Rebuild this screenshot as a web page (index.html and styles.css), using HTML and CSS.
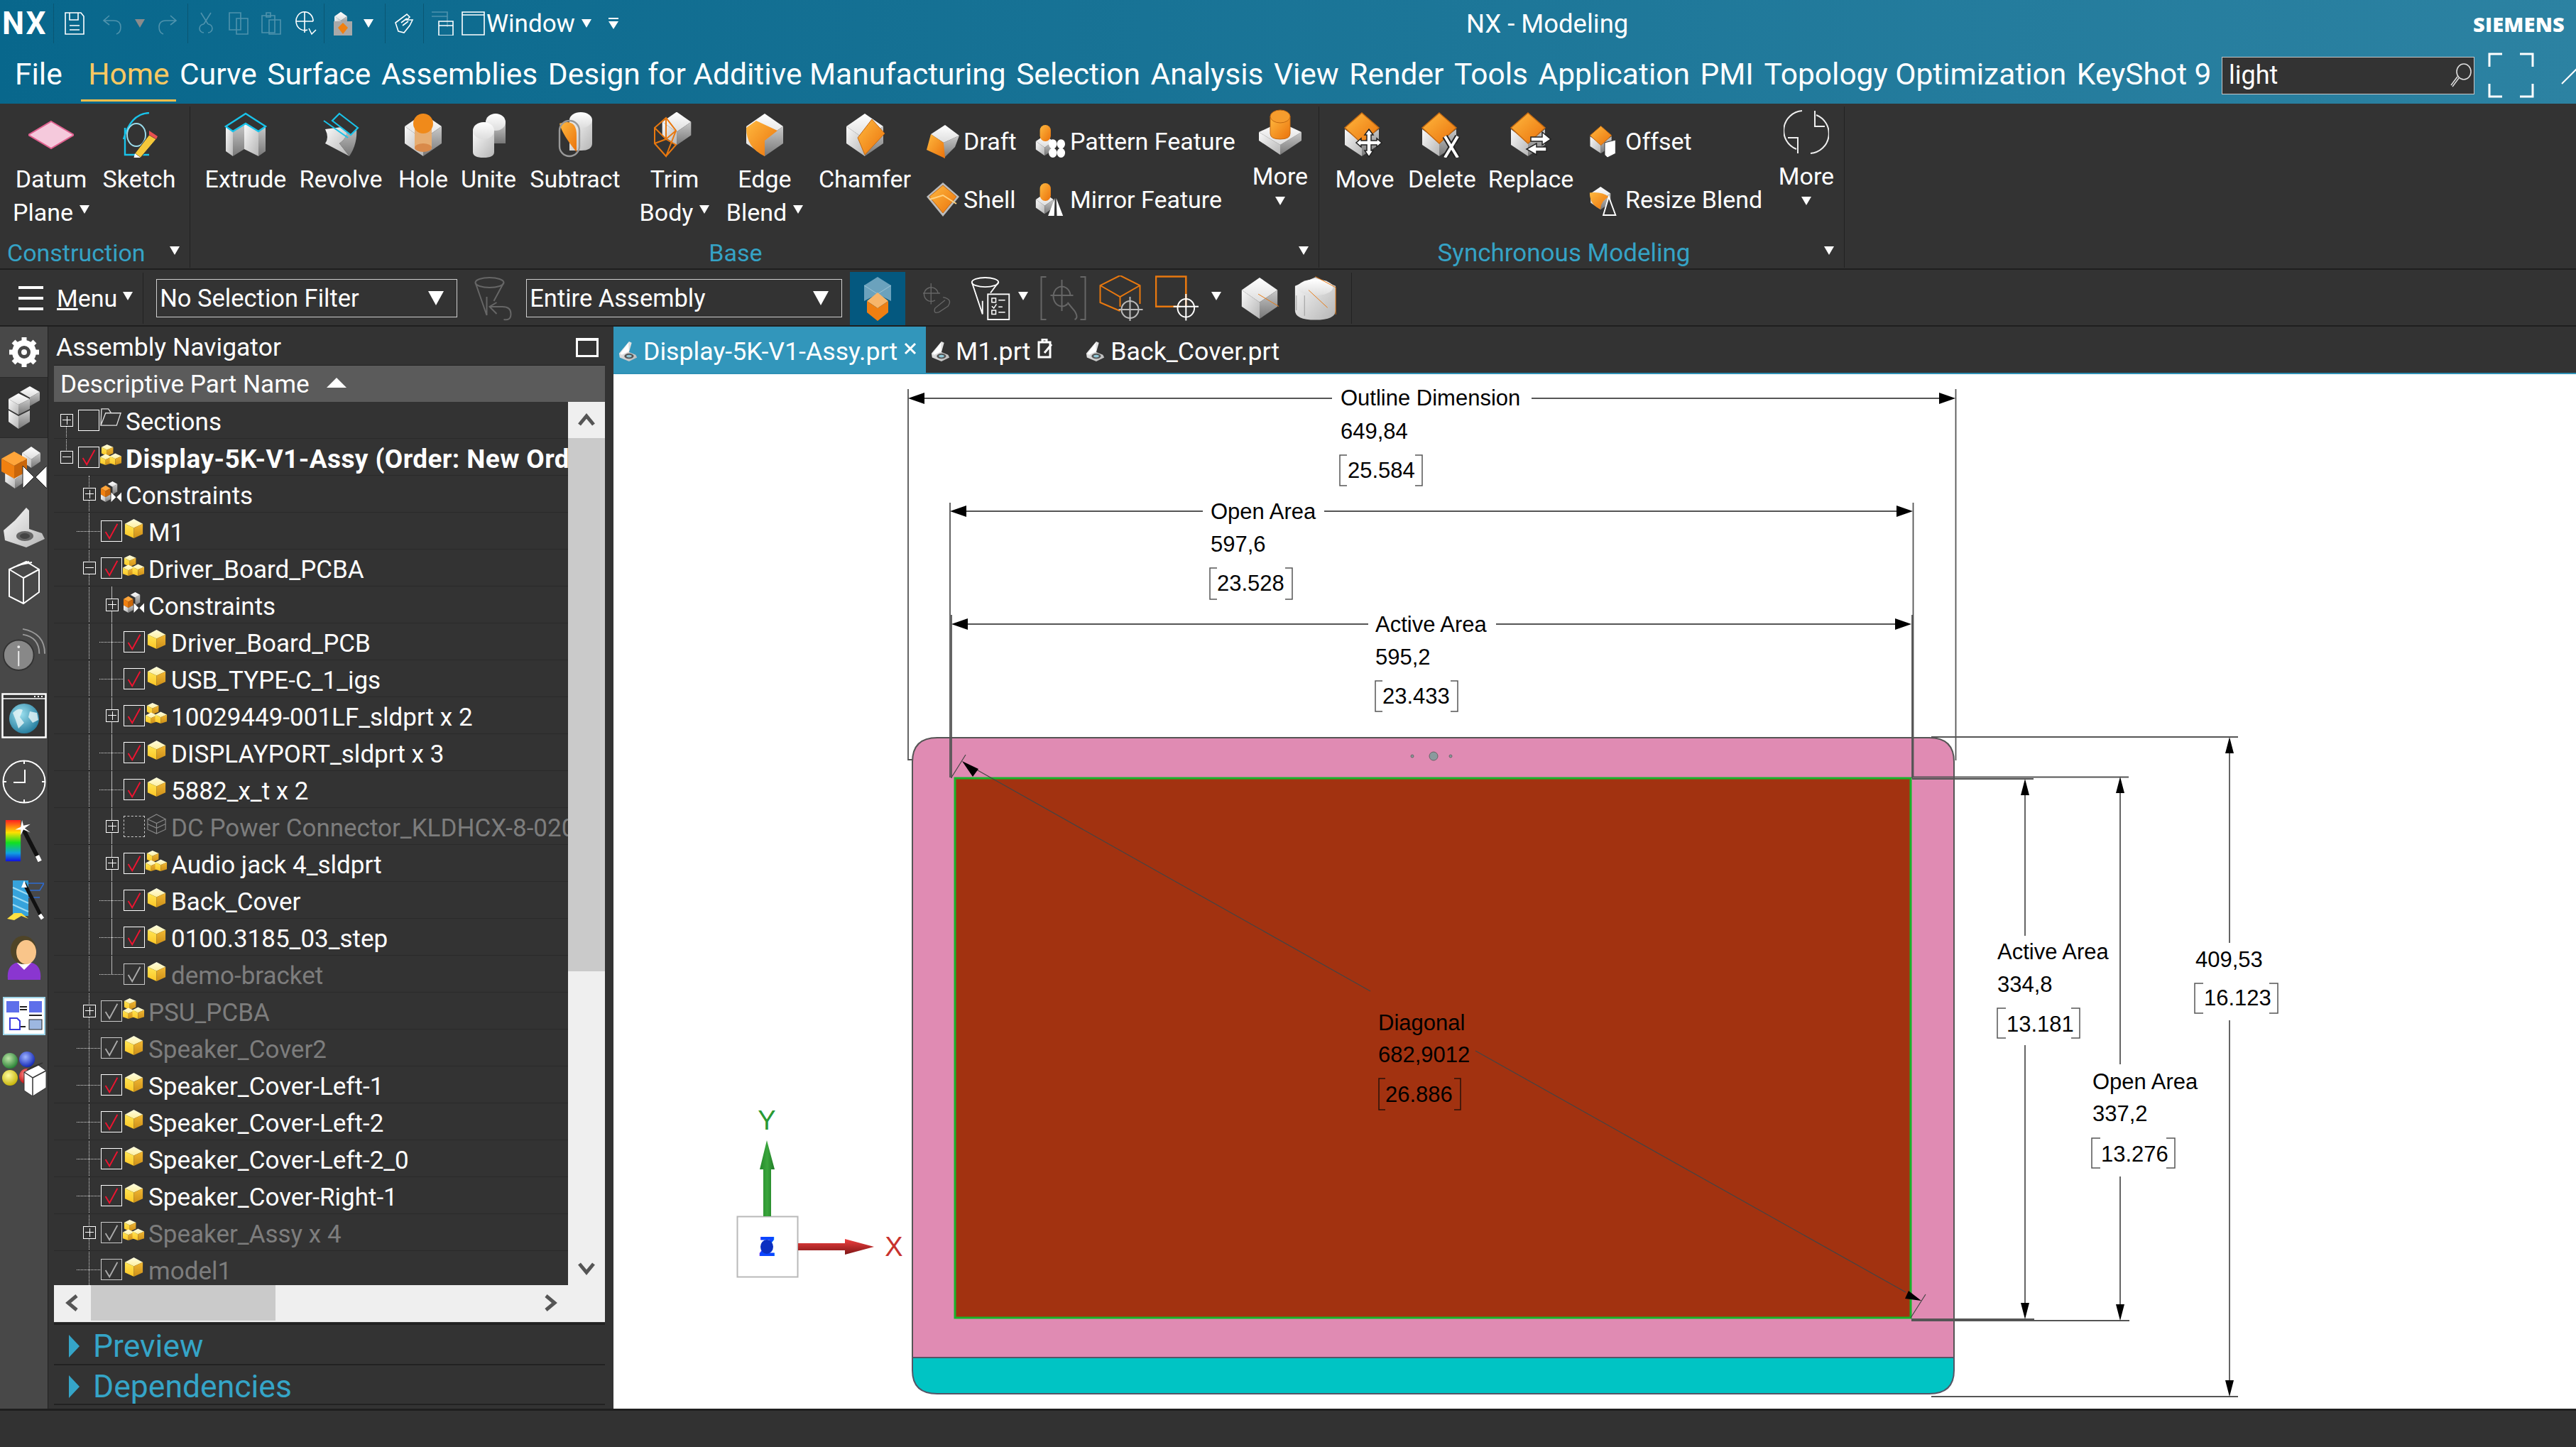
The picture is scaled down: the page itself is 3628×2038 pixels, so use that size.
FILE: index.html
```html
<!DOCTYPE html>
<html lang="en">
<head>
<meta charset="utf-8">
<title>NX - Modeling</title>
<link rel="stylesheet" href="styles.css">
</head>
<body>
<svg class="defs" width="0" height="0" aria-hidden="true">
  <defs>
    <linearGradient id="gL" x1="0" y1="0" x2="1" y2="1"><stop offset="0" stop-color="#fafafa"/><stop offset="1" stop-color="#b5b5b5"/></linearGradient>
    <linearGradient id="gR" x1="0" y1="0" x2="0" y2="1"><stop offset="0" stop-color="#c9c9c9"/><stop offset="1" stop-color="#777"/></linearGradient>
    <linearGradient id="gT" x1="0" y1="0" x2="0" y2="1"><stop offset="0" stop-color="#fff"/><stop offset="1" stop-color="#ddd"/></linearGradient>
    <linearGradient id="gO" x1="0" y1="0" x2="1" y2="1"><stop offset="0" stop-color="#ffb93f"/><stop offset="1" stop-color="#ea720c"/></linearGradient>
    <linearGradient id="gYT" x1="0" y1="0" x2="0" y2="1"><stop offset="0" stop-color="#fffde0"/><stop offset="1" stop-color="#fff0a0"/></linearGradient>
    <linearGradient id="gYL" x1="0" y1="0" x2="0" y2="1"><stop offset="0" stop-color="#ffe655"/><stop offset="1" stop-color="#fcc424"/></linearGradient>
    <linearGradient id="gYR" x1="0" y1="0" x2="0" y2="1"><stop offset="0" stop-color="#f2b833"/><stop offset="1" stop-color="#cc8f18"/></linearGradient>
    <linearGradient id="gRain" x1="0" y1="0" x2="0" y2="1"><stop offset="0" stop-color="#ff2020"/><stop offset=".3" stop-color="#ffe000"/><stop offset=".55" stop-color="#10e020"/><stop offset=".8" stop-color="#10a0e0"/><stop offset="1" stop-color="#1010e0"/></linearGradient>
    <linearGradient id="gXarrow" x1="0" y1="0" x2="0" y2="1"><stop offset="0" stop-color="#f04040"/><stop offset="1" stop-color="#7e1515"/></linearGradient>
    <linearGradient id="gYarrow" x1="0" y1="0" x2="1" y2="0"><stop offset="0" stop-color="#248a2a"/><stop offset=".5" stop-color="#3aa53c"/><stop offset="1" stop-color="#1e7a24"/></linearGradient>
    <radialGradient id="gGlobe" cx=".4" cy=".35" r=".8"><stop offset="0" stop-color="#9be0ef"/><stop offset="1" stop-color="#0f6a8f"/></radialGradient>
    <radialGradient id="gBallG" cx=".4" cy=".35" r=".7"><stop offset="0" stop-color="#bfe6a8"/><stop offset="1" stop-color="#1f7a2f"/></radialGradient>
    <radialGradient id="gBallB" cx=".4" cy=".35" r=".7"><stop offset="0" stop-color="#9fb4ff"/><stop offset="1" stop-color="#0a1fb0"/></radialGradient>
    <radialGradient id="gBallY" cx=".4" cy=".35" r=".7"><stop offset="0" stop-color="#fffca0"/><stop offset="1" stop-color="#c4b000"/></radialGradient>
    <radialGradient id="gBallR" cx=".4" cy=".35" r=".7"><stop offset="0" stop-color="#ff9090"/><stop offset="1" stop-color="#c00000"/></radialGradient>

    <symbol id="cube" viewBox="0 0 32 32">
      <path fill="url(#gYT)" d="M16 2 29 9 16 15 3 9Z"/>
      <path fill="url(#gYL)" d="M3 9 16 15V30L3 24Z"/>
      <path fill="url(#gYR)" d="M29 9 16 15V30L29 24Z"/>
    </symbol>
    <symbol id="asm" viewBox="0 0 32 32">
      <path fill="url(#gYT)" d="M10 1 19 5 10 9 2 5Z"/><path fill="url(#gYL)" d="M2 5 10 9V18L2 14Z"/><path fill="url(#gYR)" d="M19 5 10 9V18L19 14Z"/>
      <path fill="url(#gYT)" d="M8 15 17 19 8 23 0 19Z"/><path fill="url(#gYL)" d="M0 19 8 23V31L0 28Z"/><path fill="url(#gYR)" d="M17 19 8 23V31L17 28Z"/>
      <path fill="url(#gYT)" d="M22 14 31 18 22 22 14 18Z"/><path fill="url(#gYL)" d="M14 18 22 22V31L14 28Z"/><path fill="url(#gYR)" d="M31 18 22 22V31L31 28Z"/>
    </symbol>
    <symbol id="con" viewBox="0 0 32 32">
      <path fill="url(#gT)" d="M18 1 25 5 18 9 11 5Z"/><path fill="url(#gR)" d="M25 5 18 9V20L25 16Z"/>
      <path fill="#ffa53a" d="M8 7 15 11 8 15 1 11Z"/><path fill="#f08010" d="M1 11 8 15V24L1 20Z"/><path fill="#c9660a" d="M15 11 8 15V24L15 20Z"/>
      <path fill="url(#gL)" d="M1 20 8 24V31L1 27Z"/><path fill="url(#gR)" d="M15 20 8 24V31L15 27Z"/>
      <path fill="#fff" d="M16 17 23 24 16 31ZM31 17 24 24 31 31Z"/>
    </symbol>
    <symbol id="part" viewBox="0 0 32 32">
      <path fill="url(#gL)" d="M17 1 21 3 17 17 27 21 29 25 17 31 3 25 2 19Z"/>
      <path fill="#fff" d="M4 19 16 3 17 16 6 21Z"/>
      <ellipse cx="17" cy="23" rx="7" ry="4" fill="#555"/><ellipse cx="17" cy="23" rx="4" ry="2" fill="#8fc6d6"/>
    </symbol>
    <symbol id="tick" viewBox="0 0 30 30"><path d="M6 16 12 26 24 4" fill="none" stroke="currentColor" stroke-width="2"/></symbol>
    <symbol id="hexG" viewBox="0 0 64 64">
      <path fill="url(#gT)" d="M32 2 58 20 32 38 6 20Z"/><path fill="url(#gL)" d="M6 20 32 38V62L6 44Z"/><path fill="url(#gR)" d="M58 20 32 38V62L58 44Z"/>
    </symbol>
    <symbol id="syncBase" viewBox="0 0 64 64">
      <path fill="url(#gL)" d="M4 24 28 42V62L4 46Z"/><path fill="url(#gR)" d="M52 24 28 42V62L52 46Z"/>
      <path fill="url(#gO)" stroke="#c46a12" stroke-width="1.5" d="M28 1 52 22 28 44 4 22Z"/>
    </symbol>
  </defs>
</svg>

<header class="appbar">
  <div class="titlerow">
    <span class="nx">NX</span>
    <i class="qsep m5"></i>
    <svg class="qa w34 m12" viewBox="0 0 34 34"><path class="ql" d="M4 2H26L30 7V32H4ZM10 2V12H22V2M10 20H24M10 26H24"/></svg>
    <svg class="qa w30 m20" viewBox="0 0 30 34"><path class="qd" d="M12 6 4 13 12 19M4 13H18Q28 13 28 22 28 30 22 32"/></svg>
    <span class="caret gray m18"></span>
    <svg class="qa w30 m18" viewBox="0 0 30 34"><path class="qd" d="M18 6 26 13 18 19M26 13H12Q2 13 2 22 2 30 8 32"/></svg>
    <i class="qsep m12"></i>
    <svg class="qa w30 m10" viewBox="0 0 30 34"><path class="qd" d="M8 2 18 18M22 2 12 18M12 18A5 5 0 1 0 12 30M18 18A5 5 0 1 1 18 30"/></svg>
    <svg class="qa w34 m14" viewBox="0 0 34 34"><path class="qd" d="M4 2H20V26H4ZM14 10H30V32H14Z"/></svg>
    <svg class="qa w34 m12" viewBox="0 0 34 34"><path class="qd" d="M4 6H22V30H4ZM10 2H16V8H10ZM14 12H30V32H14Z"/></svg>
    <svg class="qa w34 m14" viewBox="0 0 34 34"><path class="ql" d="M16 1V30M4 14H28M28 14A12 13 0 1 0 20 26M22 24 26 32 32 26"/></svg>
    <i class="qsep m9"></i>
    <svg class="qa w34 m9" viewBox="0 0 34 34"><use href="#hexG" x="3" y="0" width="22" height="22"/><rect x="4" y="14" width="26" height="20" fill="#a9a9a9"/><path fill="#f08010" d="M17 16 24 23 17 32 10 23Z"/></svg>
    <span class="caret m12"></span>
    <i class="qsep m16"></i>
    <svg class="qa w30 m10" viewBox="0 0 30 34"><path class="ql" d="M4 16 20 4 24 8 20 12 28 12 24 20 16 30 8 28ZM12 16 20 10M14 20 22 14"/></svg>
    <i class="qsep m13"></i>
    <svg class="qa w34 m9" viewBox="0 0 34 34"><path class="qd" d="M2 1H24V22M2 7H24"/><path class="ql" d="M12 14H32V34H12ZM12 20H32"/></svg>
    <svg class="qa w36 m9 tall" viewBox="0 0 36 34"><path class="ql" d="M2 1H33V33H2ZM2 5H33"/></svg>
    <span class="win">Window</span>
    <span class="caret m9"></span>
    <span class="overflow m24"></span>
    <span class="app-title">NX - Modeling</span>
    <span class="siemens">SIEMENS</span>
  </div>
  <nav class="menurow">
    <span class="mi file">File</span>
    <span class="mi home">Home</span>
    <span class="mi">Curve</span>
    <span class="mi">Surface</span>
    <span class="mi">Assemblies</span>
    <span class="mi">Design for Additive Manufacturing</span>
    <span class="mi">Selection</span>
    <span class="mi">Analysis</span>
    <span class="mi">View</span>
    <span class="mi">Render</span>
    <span class="mi">Tools</span>
    <span class="mi">Application</span>
    <span class="mi">PMI</span>
    <span class="mi">Topology Optimization</span>
    <span class="mi">KeyShot 9</span>
    <div class="search">
      <span>light</span>
      <svg class="search-ico" viewBox="0 0 32 34"><path d="M2 31 11 19M4 33 13 21" fill="none" stroke="#ddd" stroke-width="1.5"/><ellipse cx="20" cy="12" rx="10" ry="11" fill="none" stroke="#ddd" stroke-width="1.6"/></svg>
    </div>
    <svg class="fullscr" viewBox="0 0 65 64"><path d="M20 2H2V20M45 2H63V20M20 62H2V44M45 62H63V44" fill="none" stroke="#fff" stroke-width="3"/></svg>
    <svg class="slash" viewBox="0 0 30 30"><path d="M1 29 29 1" stroke="#fff" stroke-width="2"/></svg>
  </nav>
</header>

<section class="ribbon">
  <div class="group g-con">
    <div class="tools">
      <div class="tool"><svg class="ticon" viewBox="0 0 64 64"><path fill="#f5c9dc" stroke="#e0608f" stroke-width="2" d="M32 13 64 32 32 51 0 32Z"/></svg><span class="lbl">Datum<br>Plane<i class="caret in"></i></span></div>
      <div class="tool"><svg class="ticon" viewBox="0 0 64 64"><path d="M46 1Q20 2 10 38M12 22V60H46" fill="none" stroke="#19c3ea" stroke-width="2.4"/><ellipse cx="28" cy="32" rx="13" ry="16" fill="none" stroke="#9adbea" stroke-width="2"/><path fill="#f5c83a" stroke="#333" d="M46 32 56 38 34 64 26 58Z"/><path fill="#e85050" d="M46 26 58 34 56 38 46 32Z"/><path fill="#fff" d="M26 58 34 64 24 66Z"/></svg><span class="lbl">Sketch</span></div>
    </div>
    <div class="glabel"><span>Construction</span><i class="caret gl-caret"></i></div>
  </div>
  <div class="group g-base">
    <div class="tools">
      <div class="tool"><svg class="ticon" viewBox="0 0 64 64"><path fill="url(#gL)" d="M4 20 14 27V62L4 55Z"/><path fill="url(#gR)" d="M14 27 30 16V52L14 62Z"/><path fill="url(#gL)" d="M30 16 50 27V62L30 52Z"/><path fill="url(#gR)" d="M50 27 60 20V55L50 62Z"/><path fill="#333" stroke="#19c3ea" stroke-width="2.4" d="M32 2 60 20 50 27 32 16 14 27 4 20Z"/></svg><span class="lbl">Extrude</span></div>
      <div class="tool"><svg class="ticon" viewBox="0 0 64 64"><path fill="url(#gL)" d="M10 24 40 20Q44 34 30 44L44 62 10 44Q16 36 10 24Z"/><path fill="url(#gR)" d="M40 18 54 22Q56 44 44 62L30 44Q44 34 40 18Z"/><path fill="#333" stroke="#19c3ea" stroke-width="2.2" d="M30 2 56 22 46 32 20 12Z"/><path fill="none" stroke="#19c3ea" stroke-width="2" d="M8 12 42 36"/></svg><span class="lbl">Revolve</span></div>
      <div class="tool"><svg class="ticon" viewBox="0 0 64 64"><use href="#hexG"/><rect x="20" y="18" width="24" height="34" fill="#e7ae72"/><ellipse cx="32" cy="16" rx="14" ry="14" fill="#f08a1a"/><ellipse cx="32" cy="50" rx="12" ry="6" fill="#d98a4a"/></svg><span class="lbl">Hole</span></div>
      <div class="tool"><svg class="ticon" viewBox="0 0 64 64"><rect x="26" y="14" width="30" height="30" fill="url(#gR)"/><ellipse cx="42" cy="14" rx="14" ry="12" fill="url(#gT)"/><path fill="url(#gL)" d="M10 26H40V56Q40 64 25 64T10 56Z"/><ellipse cx="25" cy="26" rx="15" ry="12" fill="url(#gT)"/></svg><span class="lbl">Unite</span></div>
      <div class="tool"><svg class="ticon" viewBox="0 0 64 64"><path fill="url(#gL)" d="M24 10H56V44Q56 54 40 54H24Z"/><ellipse cx="40" cy="11" rx="16" ry="11" fill="url(#gT)"/><path fill="url(#gO)" d="M10 16Q34 8 34 32V56Q14 32 10 16Z"/><rect x="10" y="12" width="28" height="50" rx="14" fill="none" stroke="#999" stroke-width="2.4"/></svg><span class="lbl">Subtract</span></div>
      <div class="tool"><svg class="ticon" viewBox="0 0 64 64"><use href="#hexG" x="8" y="-2" width="54" height="50"/><path fill="none" stroke="#e8780f" stroke-width="2" d="M4 22 20 8 34 26 20 62 4 44ZM20 8V38M4 22 20 38 34 26M20 38 34 46 20 62M4 44 20 38"/></svg><span class="lbl">Trim<br>Body<i class="caret in"></i></span></div>
      <div class="tool"><svg class="ticon" viewBox="0 0 64 64"><use href="#hexG"/><path fill="url(#gO)" d="M20 12 50 26 32 40Q32 50 32 62 6 50 6 22Z"/></svg><span class="lbl">Edge<br>Blend<i class="caret in"></i></span></div>
      <div class="tool"><svg class="ticon" viewBox="0 0 64 64"><use href="#hexG"/><path fill="url(#gO)" stroke="#c46a12" d="M42 10 60 30 32 60 22 36Z"/></svg><span class="lbl">Chamfer</span></div>
      <div class="stack">
        <div class="sitem"><svg class="sicon" viewBox="0 0 46 48"><path fill="url(#gT)" d="M26 1 46 16 24 26 6 14Z"/><path fill="url(#gR)" d="M46 16 24 26V48L40 32Z"/><path fill="url(#gO)" d="M6 14 24 26 26 48 0 36Z"/></svg><span>Draft</span></div>
        <div class="sitem"><svg class="sicon" viewBox="0 0 46 48"><path fill="#bbb" d="M23 0 46 20 23 48 0 20Z"/><path fill="url(#gO)" stroke="#c46a12" d="M23 4 42 20 23 43 4 20Z"/><path d="M4 24 23 18 42 30" fill="none" stroke="#ffd280" stroke-width="2"/></svg><span>Shell</span></div>
      </div>
      <div class="stack">
        <div class="sitem"><svg class="sicon" viewBox="0 0 48 48"><use href="#hexG" x="0" y="14" width="34" height="32"/><rect x="10" y="0" width="16" height="24" rx="8" fill="url(#gO)"/><g fill="#fff"><ellipse cx="29" cy="28" rx="6" ry="7"/><ellipse cx="41" cy="28" rx="6" ry="7"/><ellipse cx="29" cy="41" rx="6" ry="7"/><ellipse cx="41" cy="41" rx="6" ry="7"/></g></svg><span>Pattern Feature</span></div>
        <div class="sitem"><svg class="sicon" viewBox="0 0 48 48"><use href="#hexG" x="0" y="14" width="34" height="32"/><rect x="10" y="0" width="16" height="26" rx="8" fill="url(#gO)"/><path fill="#fff" d="M32 22 22 48H31ZM34 22 44 48H35Z"/></svg><span>Mirror Feature</span></div>
      </div>
      <div class="tool more"><svg class="ticon big" viewBox="0 0 64 64"><path fill="url(#gL)" d="M2 32 32 50V64L2 44Z"/><path fill="url(#gR)" d="M62 32 32 50V64L62 44Z"/><path fill="url(#gT)" d="M32 18 62 32 32 50 2 32Z"/><path fill="url(#gO)" stroke="#c46a12" d="M18 10V34Q18 42 32 42T46 34V10Z"/><ellipse cx="32" cy="10" rx="14" ry="9" fill="#f69c2d" stroke="#c46a12"/></svg><span class="lbl">More<br><i class="caret"></i></span></div>
    </div>
    <div class="glabel ctr"><span>Base</span><i class="caret gl-caret"></i></div>
  </div>
  <div class="group g-sync">
    <div class="tools">
      <div class="tool"><svg class="ticon" viewBox="0 0 64 64"><use href="#syncBase"/><path fill="#fff" stroke="#222" stroke-width="1.5" d="M38 24 44 32H41V40H49V37L56 43 49 49V46H41V54H44L38 63 32 54H35V46H27V49L20 43 27 37V40H35V32H32Z"/></svg><span class="lbl">Move</span></div>
      <div class="tool"><svg class="ticon" viewBox="0 0 64 64"><use href="#syncBase"/><path d="M36 34 54 64M54 34 36 64" stroke="#222" stroke-width="8"/><path d="M36 34 54 64M54 34 36 64" stroke="#fff" stroke-width="4"/></svg><span class="lbl">Delete</span></div>
      <div class="tool"><svg class="ticon" viewBox="0 0 64 64"><use href="#syncBase"/><path fill="#fff" stroke="#222" stroke-width="1.5" d="M48 28 60 38 48 46V41H32V35H48ZM40 44V49H54V55H40V60L26 52Z"/></svg><span class="lbl">Replace</span></div>
      <div class="stack wide">
        <div class="sitem"><svg class="sicon" viewBox="0 0 48 48"><use href="#syncBase" width="42" height="44"/><path fill="#fff" stroke="#333" d="M24 26 40 22V42L28 48 24 44Z"/></svg><span>Offset</span></div>
        <div class="sitem"><svg class="sicon" viewBox="0 0 48 48"><use href="#hexG" width="36" height="44"/><path fill="url(#gO)" d="M2 14Q20 12 30 20 18 26 18 38 2 32 2 14Z"/><path fill="#333" stroke="#fff" stroke-width="2" d="M30 20 40 47H22Z"/></svg><span>Resize Blend</span></div>
      </div>
      <div class="tool more"><svg class="ticon big" viewBox="0 0 64 64"><path d="M26 2A28 28 0 0 0 18 56M38 62A28 28 0 0 0 46 8M44 2V24H58M20 62V40H6" fill="none" stroke="#eee" stroke-width="2"/></svg><span class="lbl">More<br><i class="caret"></i></span></div>
    </div>
    <div class="glabel ctr"><span>Synchronous Modeling</span><i class="caret gl-caret"></i></div>
  </div>
</section>

<section class="selbar">
  <svg class="burger" viewBox="0 0 36 36"><path d="M1 3H36M1 18H36M1 33H36" stroke="#fff" stroke-width="4"/></svg>
  <span class="menu-btn"><u>M</u>enu</span><i class="caret"></i>
  <i class="sel-sep"></i>
  <div class="combo c1"><span>No Selection Filter</span><i class="caret lg"></i></div>
  <svg class="seli gray-i" viewBox="0 0 64 64"><ellipse cx="24" cy="10" rx="20" ry="7" fill="none" stroke="#666" stroke-width="2"/><path d="M4 10 20 56V30M44 10 30 36M34 38 24 44 34 54M24 44H42Q54 44 54 54T44 62" fill="none" stroke="#666" stroke-width="2"/></svg>
  <div class="combo c2"><span>Entire Assembly</span><i class="caret lg"></i></div>
  <div class="sel-active"><svg viewBox="0 0 50 64"><path fill="#6ba2bd" d="M25 2 44 14V36L25 26 6 36V14Z"/><path fill="none" stroke="#9cc4d6" stroke-width="1" d="M6 14 25 26 44 14M25 26V46"/><path fill="#f7b56a" d="M25 24 40 36 25 46 10 36Z"/><path fill="#ef7f12" d="M10 36 25 46V64L10 52ZM40 36 25 46V64L40 52Z"/></svg></div>
  <svg class="seli s-link" viewBox="0 0 64 64"><path d="M16 2V44M0 22H34M30 22A14 14 0 1 0 24 36M40 30Q60 34 50 48L32 60Q20 64 24 52L44 36" fill="none" stroke="#666" stroke-width="2"/></svg>
  <svg class="seli s-filter" viewBox="0 0 64 64"><ellipse cx="24" cy="8" rx="20" ry="7" fill="none" stroke="#fff" stroke-width="2"/><path d="M4 8 20 56V36M44 8 32 24" fill="none" stroke="#fff" stroke-width="2"/><rect x="28" y="26" width="32" height="38" fill="#333" stroke="#fff" stroke-width="2"/><path d="M34 32H40V38H34ZM34 50H40V56H34ZM44 35H54M44 45H50M44 53H54M34 44 37 47 41 41" fill="none" stroke="#fff" stroke-width="1.6"/></svg>
  <i class="caret sc"></i>
  <svg class="seli s-brk" viewBox="0 0 64 64"><path d="M8 2H1V62H8M56 2H63V62H56M30 6V50M14 28H46M42 28A12 14 0 1 0 38 40M38 38 48 50Q54 60 48 62" fill="none" stroke="#666" stroke-width="2"/></svg>
  <svg class="seli s-ocube" viewBox="0 0 64 64"><path d="M30 50 2 38V14L30 0 58 14V40M2 14 30 30 58 14M30 30V44" fill="none" stroke="#e8780f" stroke-width="2"/><ellipse cx="44" cy="48" rx="12" ry="12" fill="none" stroke="#bbb" stroke-width="2"/><path d="M44 30V66M28 48H62" stroke="#bbb" stroke-width="2"/></svg>
  <svg class="seli s-orect" viewBox="0 0 64 64"><path d="M44 44V1H1V44H36" fill="none" stroke="#e8780f" stroke-width="2.6"/><ellipse cx="44" cy="46" rx="12" ry="13" fill="none" stroke="#fff" stroke-width="2"/><path d="M44 26V64M26 44H62" stroke="#fff" stroke-width="2"/></svg>
  <i class="caret sc2"></i>
  <svg class="seli s-w1" viewBox="0 0 64 64"><use href="#hexG"/><path d="M30 26 60 44" stroke="#e8780f" stroke-width="1"/></svg>
  <svg class="seli s-w2" viewBox="0 0 64 64"><path fill="url(#gL)" d="M2 14 32 1 62 14V50Q62 64 32 64T2 50Z"/><ellipse cx="32" cy="16" rx="26" ry="12" fill="url(#gT)"/><path d="M32 0 62 16V56M22 20 50 46" fill="none" stroke="#e8780f" stroke-width="1"/><path d="M16 28V58M4 28V50" stroke="#999" stroke-width="1" fill="none"/></svg>
  <i class="sel-sep last"></i>
</section>

<main class="main">
  <aside class="rail">
    <div class="cell gear"><svg viewBox="0 0 44 44"><circle cx="22" cy="22" r="13" fill="none" stroke="#fff" stroke-width="8"/><circle cx="22" cy="22" r="4" fill="#fff"/><path d="M22 1V8M22 36V43M1 22H8M36 22H43M7 7 12 12M32 32 37 37M37 7 32 12M12 32 7 37" stroke="#fff" stroke-width="7"/></svg></div>
    <div class="cell active stk"><svg viewBox="0 0 44 60"><path fill="url(#gT)" d="M30 0 44 8 30 16 16 8Z"/><path fill="url(#gR)" d="M44 8 30 16V28L44 20Z"/><path fill="url(#gT)" d="M14 10 30 18 14 26 0 18Z"/><path fill="url(#gL)" d="M0 18 14 26V40L0 32Z"/><path fill="url(#gR)" d="M30 18 14 26V40L30 32Z"/><path fill="url(#gL)" d="M0 34 14 42V60L0 50Z"/><path fill="url(#gR)" d="M30 34 14 42V60L30 50Z"/></svg></div>
    <div class="cell asm"><svg viewBox="0 0 64 64"><use href="#hexG" x="26" y="0" width="32" height="36"/><use href="#hexG" x="2" y="28" width="34" height="36"/><path fill="#ffa53a" d="M18 10 36 20 18 30 0 20Z"/><path fill="#f08010" d="M0 20 18 30V48L0 38Z"/><path fill="#c9660a" d="M36 20 18 30V48L36 38Z"/><path fill="#fff" stroke="#222" d="M30 30 46 46 30 62ZM64 30 48 46 64 62Z"/></svg></div>
    <div class="cell bracket"><svg viewBox="0 0 62 60"><path fill="url(#gL)" d="M18 22 34 4 38 8V34L56 40 60 48 34 60 4 50 2 36Z"/><ellipse cx="32" cy="44" rx="12" ry="7" fill="#666"/><ellipse cx="32" cy="44" rx="7" ry="4" fill="#444"/></svg></div>
    <div class="cell book"><svg viewBox="0 0 46 62"><path d="M2 12 26 1 44 12V44L22 60 2 50ZM2 12 22 24V60M22 24 44 12M8 9 30 1M14 6 34 2" fill="none" stroke="#fff" stroke-width="2"/></svg></div>
    <div class="cell info"><svg viewBox="0 0 64 62"><path d="M30 2Q62 8 62 38M30 10Q54 14 54 38" fill="none" stroke="#999" stroke-width="2"/><circle cx="24" cy="40" r="22" fill="#888" stroke="#333" stroke-width="2"/><path d="M24 34V56" stroke="#eee" stroke-width="2"/><circle cx="24" cy="28" r="2" fill="#eee"/></svg></div>
    <div class="cell globe"><svg viewBox="0 0 64 64"><rect x="1.5" y="1.5" width="61" height="61" fill="#333" stroke="#fff" stroke-width="2.5"/><path d="M2 8H62" stroke="#fff" stroke-width="1.5"/><path d="M46 5H48M51 5H53M56 5H58" stroke="#fff" stroke-width="2"/><circle cx="32" cy="36" r="21" fill="url(#gGlobe)"/><path d="M16 28Q24 20 30 24L26 34 32 42 24 50 20 38ZM40 26 50 28 52 38 44 42 38 34Z" fill="#eaf6f8" opacity=".8"/></svg></div>
    <div class="cell clock"><svg viewBox="0 0 62 62"><circle cx="31" cy="31" r="29.5" fill="none" stroke="#fff" stroke-width="2"/><path d="M31 1V6M31 56V61M1 31H6M56 31H61M32 14V32H16" fill="none" stroke="#fff" stroke-width="2"/></svg></div>
    <div class="cell rain"><svg viewBox="0 0 54 62"><rect x="0" y="0" width="22" height="60" fill="url(#gRain)"/><path d="M24 10 50 60" stroke="#111" stroke-width="6"/><path d="M46 52 50 60" stroke="#fff" stroke-width="6"/><path d="M24 0 26 8 36 6 28 12 36 18 26 14 22 22 22 14 14 14 22 10Z" fill="#fff"/></svg></div>
    <div class="cell wiz"><svg viewBox="0 0 56 56"><path d="M30 4H56L50 14H30M30 24H50" fill="none" stroke="#2e6bd0" stroke-width="1.5"/><rect x="12" y="0" width="22" height="50" fill="#37a3dc"/><path d="M12 10 34 20M12 22 34 32M12 34 34 44" stroke="#9ddcf5" stroke-width="2"/><path d="M4 54 14 46 24 46 34 54 24 50 14 56Z" fill="#ffe040"/><path d="M28 4 54 54" stroke="#111" stroke-width="5"/><path d="M50 48 54 54" stroke="#fff" stroke-width="5"/><path d="M28 0 32 10 24 10Z" fill="#fff"/></svg></div>
    <div class="cell person"><svg viewBox="0 0 50 62"><path d="M2 62Q0 42 14 38H36Q50 42 48 62Z" fill="#8a36d0"/><path d="M15 38H35L25 48Z" fill="#fff"/><ellipse cx="24" cy="20" rx="18" ry="20" fill="#4f4427"/><ellipse cx="28" cy="23" rx="14" ry="17" fill="#f9c58a"/></svg></div>
    <div class="cell layout"><svg viewBox="0 0 60 54"><rect x="1" y="1" width="58" height="52" fill="#fff" stroke="#9fd4e8" stroke-width="2"/><rect x="5" y="6" width="18" height="16" fill="#5e6fea"/><rect x="37" y="6" width="18" height="16" fill="#5e6fea"/><path d="M24 14H34M24 18H34M37 26H55M24 42H32" stroke="#222" stroke-width="2"/><path d="M10 30H20L24 34V46H10Z" fill="#fff" stroke="#3a3ae0" stroke-width="2"/><rect x="37" y="32" width="18" height="14" fill="#9db7e0" stroke="#222"/></svg></div>
    <div class="cell balls"><svg viewBox="0 0 64 64"><circle cx="12" cy="14" r="11" fill="url(#gBallG)"/><circle cx="36" cy="12" r="11" fill="url(#gBallB)"/><circle cx="12" cy="38" r="11" fill="url(#gBallY)"/><circle cx="36" cy="36" r="11" fill="url(#gBallR)"/><path fill="#fff" stroke="#333" d="M32 30 52 20 63 28V52L44 64 32 56Z"/><path d="M32 30 44 38V64M44 38 63 28M36 27 56 18M40 24 58 17" fill="none" stroke="#333" stroke-width="1.5"/></svg></div>
  </aside>

  <section class="panel">
    <div class="ptitle"><span>Assembly Navigator</span><i class="maxbox"></i></div>
    <div class="grid">
      <div class="ghead"><span>Descriptive Part Name</span><i class="sortup"></i></div>
      <div class="gbody">
        <div class="tree">
          <i class="guide g0"></i><i class="guide g1"></i><i class="guide g2"></i>
          <div class="row l0"><i class="exp plus"></i><i class="chk"></i><svg class="ico" viewBox="0 0 32 32"><path d="M1 27 8 9H30L24 27ZM1 27 2 3H12L16 9" fill="none" stroke="#ddd" stroke-width="1.4"/></svg><span class="nm">Sections</span></div>
          <div class="row l0"><i class="exp minus"></i><i class="chk"><svg class="red"><use href="#tick"/></svg></i><svg class="ico"><use href="#asm"/></svg><span class="nm b">Display-5K-V1-Assy (Order: New Order)</span></div>
          <div class="row l1"><i class="exp plus"></i><svg class="ico"><use href="#con"/></svg><span class="nm">Constraints</span></div>
          <div class="row l1"><i class="exp none"></i><i class="chk"><svg class="red"><use href="#tick"/></svg></i><svg class="ico"><use href="#cube"/></svg><span class="nm">M1</span></div>
          <div class="row l1"><i class="exp minus"></i><i class="chk"><svg class="red"><use href="#tick"/></svg></i><svg class="ico"><use href="#asm"/></svg><span class="nm">Driver_Board_PCBA</span></div>
          <div class="row l2"><i class="exp plus"></i><svg class="ico"><use href="#con"/></svg><span class="nm">Constraints</span></div>
          <div class="row l2"><i class="exp none"></i><i class="chk"><svg class="red"><use href="#tick"/></svg></i><svg class="ico"><use href="#cube"/></svg><span class="nm">Driver_Board_PCB</span></div>
          <div class="row l2"><i class="exp none"></i><i class="chk"><svg class="red"><use href="#tick"/></svg></i><svg class="ico"><use href="#cube"/></svg><span class="nm">USB_TYPE-C_1_igs</span></div>
          <div class="row l2"><i class="exp plus"></i><i class="chk"><svg class="red"><use href="#tick"/></svg></i><svg class="ico"><use href="#asm"/></svg><span class="nm">10029449-001LF_sldprt x 2</span></div>
          <div class="row l2"><i class="exp none"></i><i class="chk"><svg class="red"><use href="#tick"/></svg></i><svg class="ico"><use href="#cube"/></svg><span class="nm">DISPLAYPORT_sldprt x 3</span></div>
          <div class="row l2"><i class="exp none"></i><i class="chk"><svg class="red"><use href="#tick"/></svg></i><svg class="ico"><use href="#cube"/></svg><span class="nm">5882_x_t x 2</span></div>
          <div class="row l2 dim"><i class="exp plus"></i><i class="chk dash"></i><svg class="ico" viewBox="0 0 32 32"><path d="M16 2 29 9 16 15 3 9ZM3 9V24L16 30V15M29 9V24L16 30M3 16 16 22 29 16" fill="none" stroke="#888" stroke-width="1.2"/></svg><span class="nm">DC Power Connector_KLDHCX-8-0202</span></div>
          <div class="row l2"><i class="exp plus"></i><i class="chk"><svg class="red"><use href="#tick"/></svg></i><svg class="ico"><use href="#asm"/></svg><span class="nm">Audio jack 4_sldprt</span></div>
          <div class="row l2"><i class="exp none"></i><i class="chk"><svg class="red"><use href="#tick"/></svg></i><svg class="ico"><use href="#cube"/></svg><span class="nm">Back_Cover</span></div>
          <div class="row l2"><i class="exp none"></i><i class="chk"><svg class="red"><use href="#tick"/></svg></i><svg class="ico"><use href="#cube"/></svg><span class="nm">0100.3185_03_step</span></div>
          <div class="row l2 dim"><i class="exp none"></i><i class="chk"><svg class="gr"><use href="#tick"/></svg></i><svg class="ico"><use href="#cube"/></svg><span class="nm">demo-bracket</span></div>
          <div class="row l1 dim"><i class="exp plus"></i><i class="chk"><svg class="gr"><use href="#tick"/></svg></i><svg class="ico"><use href="#asm"/></svg><span class="nm">PSU_PCBA</span></div>
          <div class="row l1 dim"><i class="exp none"></i><i class="chk"><svg class="gr"><use href="#tick"/></svg></i><svg class="ico"><use href="#cube"/></svg><span class="nm">Speaker_Cover2</span></div>
          <div class="row l1"><i class="exp none"></i><i class="chk"><svg class="red"><use href="#tick"/></svg></i><svg class="ico"><use href="#cube"/></svg><span class="nm">Speaker_Cover-Left-1</span></div>
          <div class="row l1"><i class="exp none"></i><i class="chk"><svg class="red"><use href="#tick"/></svg></i><svg class="ico"><use href="#cube"/></svg><span class="nm">Speaker_Cover-Left-2</span></div>
          <div class="row l1"><i class="exp none"></i><i class="chk"><svg class="red"><use href="#tick"/></svg></i><svg class="ico"><use href="#cube"/></svg><span class="nm">Speaker_Cover-Left-2_0</span></div>
          <div class="row l1"><i class="exp none"></i><i class="chk"><svg class="red"><use href="#tick"/></svg></i><svg class="ico"><use href="#cube"/></svg><span class="nm">Speaker_Cover-Right-1</span></div>
          <div class="row l1 dim"><i class="exp plus"></i><i class="chk"><svg class="gr"><use href="#tick"/></svg></i><svg class="ico"><use href="#asm"/></svg><span class="nm">Speaker_Assy x 4</span></div>
          <div class="row l1 dim"><i class="exp none"></i><i class="chk"><svg class="gr"><use href="#tick"/></svg></i><svg class="ico"><use href="#cube"/></svg><span class="nm">model1</span></div>
        </div>
        <div class="vscroll">
          <div class="vbtn"><svg viewBox="0 0 24 24"><path d="M2 18 12 6 22 18" fill="none" stroke="#555" stroke-width="5"/></svg></div>
          <div class="vthumb"></div>
          <div class="vrest"><svg viewBox="0 0 24 24"><path d="M2 6 12 18 22 6" fill="none" stroke="#555" stroke-width="5"/></svg></div>
        </div>
      </div>
      <div class="hscroll">
        <svg class="hleft" viewBox="0 0 24 24"><path d="M18 2 6 12 18 22" fill="none" stroke="#555" stroke-width="5"/></svg>
        <div class="hthumb"></div>
        <svg class="hright" viewBox="0 0 24 24"><path d="M6 2 18 12 6 22" fill="none" stroke="#555" stroke-width="5"/></svg>
      </div>
    </div>
    <div class="acc"><i class="tri"></i><span>Preview</span></div>
    <div class="acc"><i class="tri"></i><span>Dependencies</span></div>
  </section>

  <section class="view">
    <div class="tabs">
      <div class="tab on"><svg class="tabi"><use href="#part"/></svg><span>Display-5K-V1-Assy.prt</span><svg class="tabx" viewBox="0 0 20 20"><path d="M3 3 17 17M17 3 3 17" stroke="#fff" stroke-width="3"/></svg></div>
      <div class="tab t2"><svg class="tabi"><use href="#part"/></svg><span>M1.prt</span><svg class="tabm" viewBox="0 0 22 28"><path d="M2 5H18V26H2ZM7 1H13V5H7ZM10 20 20 8" fill="none" stroke="#fff" stroke-width="3"/></svg></div>
      <div class="tab t3"><svg class="tabi"><use href="#part"/></svg><span>Back_Cover.prt</span></div>
    </div>
    <svg class="canvas" viewBox="864 527 2764 1457" width="2764" height="1457">
      <path class="body-p" d="M1285 1912V1073Q1285 1039 1320 1039H2717Q2752 1039 2752 1073V1912Z"/>
      <path class="body-t" d="M1285 1912H2752V1930Q2752 1963 2717 1963H1320Q1285 1963 1285 1930Z"/>
      <rect class="screen" x="1345" y="1096" width="1346" height="760"/>
      <circle class="cam" cx="2019" cy="1065" r="6"/><circle class="cam" cx="1989" cy="1065" r="2"/><circle class="cam" cx="2043" cy="1065" r="2"/>

      <g class="ln">
        <path d="M1279 548V1070H1285M2754.5 548V1071M1338 708V1095M2694.5 708V1095M1340 866V1096M2693 866V1096"/>
        <path d="M1302 561H1876M2157 561H2732"/>
        <path d="M1361 720H1694M1865 720H2672"/>
        <path d="M1363 879H1927M2107 879H2670"/>
        <path d="M2720 1038H3152M2693 1094.500H2998M2693 1097H2864M2692 1858H2865M2692 1860H2999M2720 1967H3152"/>
        <path d="M2852 1118V1318M2852 1472V1836M2986 1116V1499M2986 1657V1838M3140 1060V1328M3140 1437V1945"/>
      </g>
      <g class="ln thin">
        <path d="M1340 1095 1360 1063M2691 1856 2712 1823M1370 1081 1930 1396M2078 1480 2684 1820"/>
      </g>
      <g class="ar">
        <path d="M1279 561 1302 553V569ZM2754 561 2731 553V569ZM1338 720 1361 712V728ZM2694 720 2671 712V728ZM1340 879 1363 871V887ZM2692 879 2669 871V887Z"/>
        <path d="M2852 1097 2846 1120H2858ZM2852 1858 2846 1835H2858ZM2986 1094 2980 1117H2992ZM2986 1860 2980 1837H2992ZM3140 1038 3134 1061H3146ZM3140 1967 3134 1944H3146Z"/>
        <path d="M1355 1072 1378 1083 1370 1094ZM2706 1832 2683 1829 2688 1818Z"/>
      </g>
      <g class="dimbrk">
        <path d="M1897 641H1887V684H1897M1993 641H2003V684H1993"/>
        <path d="M1714 800H1704V844H1714M1810 800H1820V844H1810"/>
        <path d="M1947 959H1937V1002H1947M2043 959H2053V1002H2043"/>
        <path d="M2825 1420H2813V1462H2825M2917 1420H2929V1462H2917"/>
        <path d="M2958 1603H2946V1645H2958M3051 1603H3063V1645H3051"/>
        <path d="M3103 1385H3091V1427H3103M3196 1385H3208V1427H3196"/>
        <path class="onred" d="M1951 1519H1942V1563H1951M2048 1519H2057V1563H2048"/>
      </g>
      <g class="dt">
        <text x="1888" y="571">Outline Dimension</text>
        <text x="1888" y="618">649,84</text>
        <text x="1898" y="673">25.584</text>
        <text x="1705" y="731">Open Area</text>
        <text x="1705" y="777">597,6</text>
        <text x="1714" y="832">23.528</text>
        <text x="1937" y="890">Active Area</text>
        <text x="1937" y="936">595,2</text>
        <text x="1947" y="991">23.433</text>
        <text x="2813" y="1351">Active Area</text>
        <text x="2813" y="1397">334,8</text>
        <text x="2826" y="1453">13.181</text>
        <text x="2947" y="1534">Open Area</text>
        <text x="2947" y="1579">337,2</text>
        <text x="2959" y="1636">13.276</text>
        <text x="3092" y="1362">409,53</text>
        <text x="3104" y="1416">16.123</text>
        <text x="1941" y="1451">Diagonal</text>
        <text x="1941" y="1496">682,9012</text>
        <text x="1951" y="1552">26.886</text>
      </g>

      <rect class="wcs" x="1038.500" y="1713.500" width="85" height="85"/>
      <path fill="url(#gYarrow)" d="M1075 1713V1647H1070L1080 1606 1091 1647H1086V1713Z"/>
      <path fill="url(#gXarrow)" d="M1124 1751H1190V1745L1231 1756 1190 1767V1761H1124Z"/>
      <text class="ax y" x="1080" y="1591">Y</text>
      <text class="ax x" x="1259" y="1769">X</text>
      <text class="ax z" x="1080" y="1769">Z</text>
      <ellipse cx="1080" cy="1756" rx="9" ry="10" fill="#0a2fc0"/>
    </svg>
  </section>
</main>

<footer class="status"></footer>
</body>
</html>
```

FILE: styles.css
```css
*{box-sizing:border-box}
html,body{margin:0;padding:0}
body{width:3628px;height:2038px;overflow:hidden;background:#333;color:#fff;font-family:Roboto,"Noto Sans",Arial,sans-serif;display:flex;flex-direction:column}
i{display:block;font-style:normal}
.defs{position:absolute}

/* app bar */
.appbar{height:146px;flex:none;background:linear-gradient(90deg,#08678c 0%,#2c82a2 100%)}
.titlerow{height:66px;display:flex;align-items:center;padding-left:3px}
.nx{width:67px;font-size:44px;font-weight:700;line-height:1;letter-spacing:2px}
.qsep{width:1px;height:56px;background:#0a5673}
.qa{height:34px;flex:none}
.w30{width:30px}.w34{width:34px}.w36{width:36px}
.tall{height:34px}
.ql{fill:none;stroke:#fff;stroke-width:1.6}
.qd{fill:none;stroke:#4f93ad;stroke-width:1.6}
.m4{margin-left:4px}.m5{margin-left:5px}.m9{margin-left:9px}.m10{margin-left:10px}.m12{margin-left:12px}.m13{margin-left:13px}.m14{margin-left:14px}.m16{margin-left:16px}.m18{margin-left:18px}.m20{margin-left:20px}.m24{margin-left:24px}
.caret{width:0;height:0;border-left:7px solid transparent;border-right:7px solid transparent;border-top:12px solid #fff;flex:none}
.caret.gray{border-top-color:#8b8b8b}
.caret.in{display:inline-block;margin-left:9px;vertical-align:10px}
.win{font-size:35px}
.overflow{width:14px;height:16px;border-top:2px solid #fff;position:relative}
.overflow::after{content:"";display:block;margin-top:3px;width:0;height:0;border-left:7px solid transparent;border-right:7px solid transparent;border-top:11px solid #fff}
.app-title{font-size:36.500px;margin-left:1194px}
.siemens{margin-left:auto;padding-right:16px;font-family:"Open Sans",Roboto,sans-serif;font-size:29px;font-weight:800;letter-spacing:.2px}

.menurow{height:80px;display:flex;align-items:center;padding-left:21px;gap:14.500px;position:relative}
.mi{font-size:42.500px;line-height:56px;white-space:nowrap;padding-bottom:2px}
.file{margin-right:22px}
.home{color:#f8c862;position:relative}
.home::after{content:"";position:absolute;left:-10px;right:-9px;top:63px;height:3px;background:#f4be4c}
.search{width:356px;height:53px;background:#333;border:1px solid #c8c8c8;display:flex;align-items:center;padding:0 2px 0 9px;justify-content:space-between;font-size:36px;flex:none}
.search-ico{width:32px;height:34px}
.fullscr{width:65px;height:64px;margin-left:5px;flex:none}
.slash{width:30px;height:30px;margin-left:23px;margin-top:-4px;flex:none}

/* ribbon */
.ribbon{height:234px;flex:none;display:flex;border-bottom:2px solid #1f1f1f;background:#333;padding-top:4px}
.group{height:227px;display:flex;flex-direction:column;border-right:1px solid #222;position:relative}
.g-con{width:268px;padding-left:10px}
.g-base{width:1590px;padding-left:13px}
.g-sync{width:740px}
.tools{display:grid;height:182px;align-items:start}
.g-con .tools{grid-template-columns:124px 124px}
.g-base .tools{grid-template-columns:130px 138px 94px 90px 154px 126px 128px 154px 150px 305px 106px}
.g-sync .tools{grid-template-columns:128px 90px 160px 254px 108px}
.tool{display:flex;flex-direction:column;align-items:center;padding-top:8px}
.ticon{width:64px;height:64px;flex:none}
.ticon.big{margin-top:-4px}
.lbl{font-size:34px;line-height:47px;text-align:center;white-space:nowrap;margin-top:7px;display:block}
.more .lbl{margin-top:7px;line-height:46px}
.more .lbl .caret{margin:6px auto 0}
.stack{display:flex;flex-direction:column;padding:26px 0 0 10px;gap:36px}
.stack.wide{padding-left:1px}
.sitem{display:flex;align-items:center;gap:6px;font-size:34px;height:46px;white-space:nowrap}
.sicon{width:46px;height:48px;flex:none}
.glabel{height:45px;display:flex;align-items:center;color:#35a3c6;font-size:34px;position:relative;white-space:nowrap;padding-top:3px}
.glabel.ctr{justify-content:center}
.gl-caret{position:absolute;right:14px;top:15px}
.g-base .glabel{padding-right:66px}
.g-sync .glabel{padding-right:50px;font-size:35px}

/* selection bar */
.selbar{height:80px;flex:none;display:flex;align-items:center;border-bottom:2px solid #1f1f1f;padding:2px 0 0 25px;background:#333}
.burger{width:36px;height:36px;flex:none}
.menu-btn{font-size:34px;margin-left:19px}
.selbar>.caret{margin-left:8px;margin-top:-6px}
.sel-sep{width:1px;height:72px;background:#222;margin-left:14px}
.combo{height:54px;border:1.500px solid #cfcfcf;display:flex;align-items:center;justify-content:space-between;font-size:34.500px;padding:0 14px 0 4px}
.caret.lg{border-left-width:11px;border-right-width:11px;border-top-width:20px}
.c1{width:424px;margin-left:18px}
.c2{width:445px;margin-left:11px}
.c2 .caret,.c1 .caret{margin-right:4px}
.seli{height:64px;flex:none}
.gray-i{width:65px;margin-left:21px}
.sel-active{width:78px;height:75px;background:#04587f;margin-left:11px;display:flex;align-items:center;justify-content:center}
.sel-active svg{width:50px;height:64px}
.s-link{width:45px;margin-left:25px}
.s-filter{width:60px;margin-left:20px}
.selbar>.caret.sc{margin-left:9px}
.s-brk{width:65px;margin-left:17px}
.s-ocube{width:65px;margin-left:17px}
.s-orect{width:63px;margin-left:15px}
.selbar>.caret.sc2{margin-left:16px}
.s-w1{width:62px;margin-left:23px}
.s-w2{width:61px;margin-left:17px}
.sel-sep.last{margin-left:20px}

/* main */
.main{height:1524px;flex:none;display:flex}
.rail{width:68px;flex:none;background:#484848;display:flex;flex-direction:column;border-right:1px solid #222}
.cell{display:flex;align-items:center;justify-content:center;flex:none}
.cell.active{background:#333}
.gear{height:72px;border-bottom:1px solid #2a2a2a}.gear svg{width:44px;height:44px}
.stk{height:85px;border-bottom:1px solid #2a2a2a}.stk svg{width:44px;height:60px}
.asm{height:82px}.asm svg{width:64px;height:64px}
.bracket{height:84px}.bracket svg{width:62px;height:60px}
.book{height:76px}.book svg{width:46px;height:62px}
.info{height:110px}.info svg{width:62px;height:62px}
.globe{height:78px}.globe svg{width:64px;height:64px}
.clock{height:108px}.clock svg{width:62px;height:62px}
.rain{height:60px}.rain svg{width:54px;height:60px}
.wiz{height:106px}.wiz svg{width:56px;height:56px}
.person{height:56px}.person svg{width:50px;height:62px;overflow:visible}
.layout{height:108px}.layout svg{width:60px;height:54px}
.balls{height:54px}.balls svg{width:64px;height:64px;overflow:visible}

.panel{width:792px;flex:none;padding:0 8px;display:flex;flex-direction:column}
.ptitle{height:54px;flex:none;display:flex;align-items:center;justify-content:space-between;padding:4px 9px 0 3px;font-size:35.500px;line-height:44px}
.maxbox{width:32px;height:27px;border:3px solid #fff;border-top-width:4px}
.grid{width:776px;flex:none}
.ghead{height:52px;background:#5b5b5b;border-top:1px solid #222;display:flex;align-items:center;padding-left:9px;font-size:35.200px}
.sortup{width:0;height:0;margin-left:24px;margin-bottom:4px;border-left:14px solid transparent;border-right:14px solid transparent;border-bottom:14px solid #fff}
.gbody{display:flex;height:1244px}
.tree{width:724px;flex:none;overflow:hidden;position:relative;background:#333}
.guide{position:absolute;width:0;border-left:1px dotted #ddd;z-index:1}
.g0{left:16.500px;top:34px;height:40px}
.g1{left:49px;top:104px;height:1140px}
.g2{left:81px;top:260px;height:546px;border-left-style:solid;border-left-color:#bbb}
.row{height:52px;display:flex;align-items:center;border-bottom:1.500px solid #2a2a2a;white-space:nowrap;position:relative;z-index:2}
.l0{padding-left:9px}.l1{padding-left:41px}.l2{padding-left:73px}
.exp{width:18px;height:18px;flex:none;margin-right:6px;position:relative}
.plus,.minus{border:1px solid #fff;background:#333;background-image:linear-gradient(#fff,#fff);background-size:12px 1px;background-repeat:no-repeat;background-position:center}
.plus::after{content:"";position:absolute;left:7.500px;top:2px;width:1px;height:12px;background:#fff}
.none::before{content:"";position:absolute;left:-9px;right:-6px;top:9px;border-top:1px dotted #ddd}
.chk{width:30px;height:30px;flex:none;border:1px solid #fff;margin-right:1px;background:#333;margin-left:1px}
.chk svg{width:28px;height:28px;display:block}
.chk .red{color:#ee1430}
.chk .gr{color:#aaa}
.chk.dash{border-style:dashed}
.ico{width:31px;height:31px;flex:none;margin-top:-6px}
.nm{font-size:35px;margin-left:5px;padding-top:6px}
.nm.b{font-weight:700;font-size:37px;letter-spacing:.4px}
.dim .nm{color:#7d7d7d}
.dim .chk{border-color:#ccc}
.vscroll{width:52px;flex:none;background:#efefef;display:flex;flex-direction:column}
.vbtn{height:51px;display:flex;align-items:center;justify-content:center}
.vbtn svg,.vrest svg{width:24px;height:24px}
.vthumb{height:751px;background:#cacaca}
.vrest{flex:1;display:flex;align-items:flex-end;justify-content:center;padding-bottom:12px}
.hscroll{height:52px;background:#efefef;display:flex;align-items:center;border-bottom:2px solid #efefef}
.hleft,.hright{width:24px;height:24px;flex:none}
.hleft{margin-left:14px}
.hthumb{width:260px;height:50px;background:#cacaca;margin-left:14px}
.hright{margin-left:375px}
.acc{height:56px;display:flex;align-items:center;border-bottom:2px solid #222;color:#35a5c8;font-size:44.500px;padding-left:21px;padding-top:5px}
.grid+.acc{border-top:3px solid #222;height:60px;margin-top:1px}
.tri{width:0;height:0;border-top:16px solid transparent;border-bottom:16px solid transparent;border-left:15px solid #35a5c8;margin-right:19px}

.view{flex:1;min-width:0;margin-left:4px;display:flex;flex-direction:column}
.tabs{height:67px;display:flex;border-bottom:2px solid #2e90b5;font-size:35.700px;background:#333}
.tab{display:flex;align-items:center;height:65px;white-space:nowrap;padding-top:4px}
.tab.on{background:#3296bb;width:440px;padding-left:6px}
.tabi{width:30px;height:32px;flex:none;margin-right:6px}
.tabx{width:20px;height:20px;margin-left:8px;margin-top:-8px}
.t2{margin-left:6px}
.tabm{width:22px;height:28px;margin-left:10px;margin-top:-8px}
.t3{margin-left:45px}
.canvas{display:block;background:#fff}
.body-p{fill:#e08bb3;stroke:#555;stroke-width:2}
.body-t{fill:#00c4c4;stroke:#556;stroke-width:2}
.screen{fill:#a23210;stroke:#17b52a;stroke-width:3}
.cam{fill:#8a9a9d;stroke:#666}
.ln path{fill:none;stroke:#555;stroke-width:1.800}
.ln.thin path{stroke:#444;stroke-width:1.200}
.ar path{fill:#000}
.dimbrk path{fill:none;stroke:#555;stroke-width:1.500}
.dimbrk .onred{stroke:#2a1208}
.dt text{font-family:"Liberation Sans",Arial,sans-serif;font-size:31px;fill:#000}
.wcs{fill:#fff;stroke:#b9b9b9;stroke-width:2}
.ax{font-family:"Liberation Sans",Arial,sans-serif;font-size:38px;text-anchor:middle}
.ax.y{fill:#2a9a33}
.ax.x{fill:#c8322e}
.ax.z{fill:#0a45ff;font-weight:700}

.status{flex:1;background:#323232;border-top:3px solid #1f1f1f}
```
